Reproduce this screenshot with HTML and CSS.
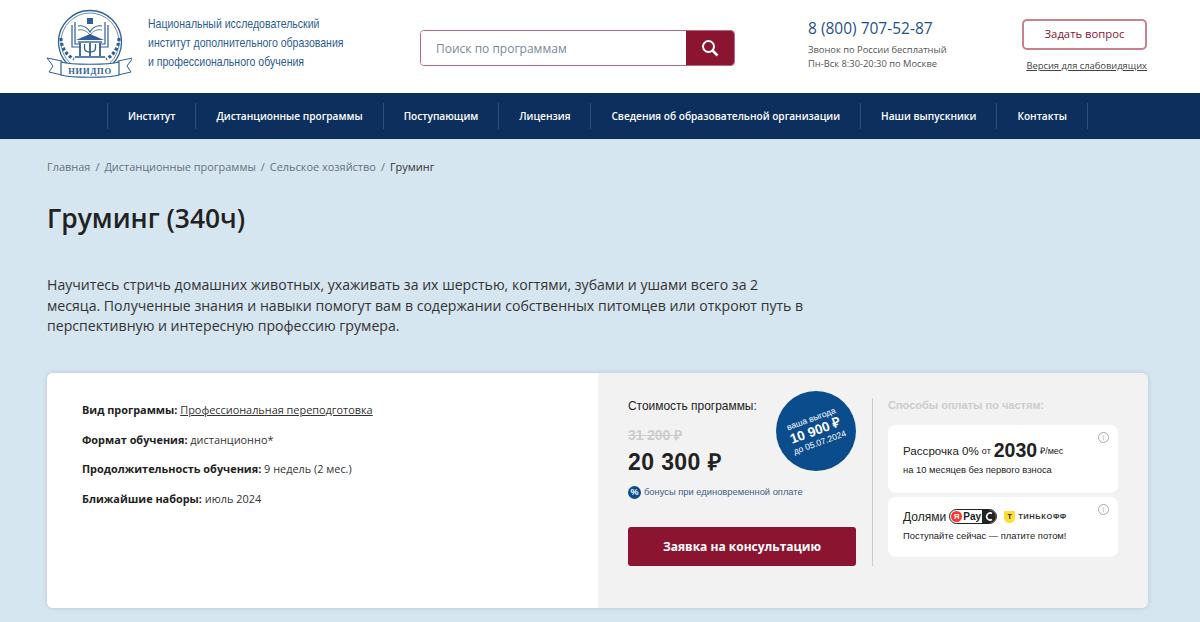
FILE: index.html
```html
<!DOCTYPE html>
<html lang="ru">

<head>
    <meta charset="UTF-8">
    <meta name="viewport" content="width=device-width, initial-scale=1.0">
    <title>Груминг (340ч)</title>
    <link rel="stylesheet" href="styles.css">
</head>

<body>
    <header class="header">
        <a class="logo" href="#">
            <svg class="logo-img" width="86" height="72" viewBox="0 0 86 72" fill="none" stroke="#2f5f96">
                <circle cx="44" cy="34" r="31.500" stroke-width="1.300" />
                <circle cx="44" cy="34" r="29" stroke-width="0.700" />
                <!-- книга и герб -->
                <rect x="41" y="10" width="6" height="6" fill="#2f5f96" stroke="none" />
                <path d="M26 17v22h9M62 17v22h-9M29 14v22h5M59 14v22h-5" stroke-width="1.200" />
                <path d="M32 18c5-1 9 1 12 6 3-5 7-7 12-6" stroke-width="1.200" />
                <path d="M32 22c5-1 9 1 12 5 3-4 7-6 12-5" stroke-width="0.800" />
                <!-- здание -->
                <path d="M30 32l14-6 14 6z" fill="#2f5f96" stroke="none" />
                <path d="M32 34h24" stroke-width="1.400" />
                <path d="M34 35v13M54 35v13M44 35v13" stroke-width="1.800" />
                <path d="M38.500 36v4c0 3 2.500 4 5.500 4s5.500-1 5.500-4v-4" stroke-width="1.300" />
                <path d="M29 49h30" stroke-width="1.600" />
                <!-- ветви -->
                <path d="M15 30c0 9 5 17 13 21M73 30c0 9-5 17-13 21" stroke-width="3.200" stroke-dasharray="3 2" />
                <!-- лента -->
                <path d="M1 50l15 3v14L3 64l4-6zM87 50l-15 3v14l13-3-4-6z" fill="#fff" stroke-width="1" />
                <path d="M15 54c10 3 48 3 58 0v13c-10 3-48 3-58 0z" fill="#fff" stroke-width="1.200" />
                <text class="logo-mark" x="44" y="66" text-anchor="middle">НИИДПО</text>
            </svg>
            <span class="logo-text">Национальный исследовательский<br>институт дополнительного образования<br>и профессионального обучения</span>
        </a>

        <form class="search">
            <input class="search-input" type="text" placeholder="Поиск по программам">
            <button class="search-btn" type="button" aria-label="Поиск">
                <svg width="18" height="18" viewBox="0 0 18 18" fill="none" stroke="#fff" stroke-width="2">
                    <circle cx="7.500" cy="7.500" r="5.500" />
                    <path d="M11.500 11.500l5 5" stroke-width="2.500" />
                </svg>
            </button>
        </form>

        <div class="contacts">
            <a class="phone" href="#">8 (800) 707-52-87</a>
            <p class="contacts-note">Звонок по России бесплатный<br>Пн-Вск 8:30-20:30 по Москве</p>
        </div>

        <div class="actions">
            <a class="ask-btn" href="#">Задать вопрос</a>
            <a class="low-vision" href="#">Версия для слабовидящих</a>
        </div>
    </header>

    <nav class="nav">
        <a href="#">Институт</a>
        <a href="#">Дистанционные программы</a>
        <a href="#">Поступающим</a>
        <a href="#">Лицензия</a>
        <a href="#">Сведения об образовательной организации</a>
        <a href="#">Наши выпускники</a>
        <a href="#">Контакты</a>
    </nav>

    <main class="main">
        <div class="breadcrumbs">
            <a href="#">Главная</a><span>/</span><a href="#">Дистанционные программы</a><span>/</span><a href="#">Сельское хозяйство</a><span>/</span><span class="current">Груминг</span>
        </div>

        <h1 class="title">Груминг (340ч)</h1>

        <p class="lead">Научитесь стричь домашних животных, ухаживать за их шерстью, когтями, зубами и ушами всего за 2 месяца. Полученные знания и навыки помогут вам в содержании собственных питомцев или откроют путь в перспективную и интересную профессию грумера.</p>

        <section class="card">
            <div class="card-info">
                <p><b>Вид программы:</b> <a href="#">Профессиональная переподготовка</a></p>
                <p><b>Формат обучения:</b> дистанционно*</p>
                <p><b>Продолжительность обучения:</b> 9 недель (2 мес.)</p>
                <p><b>Ближайшие наборы:</b> июль 2024</p>
            </div>

            <div class="card-side">
                <div class="price">
                    <div class="price-label">Стоимость программы:</div>
                    <div class="price-old">31 200 ₽</div>
                    <div class="price-new">20 300 ₽</div>
                    <div class="bonus"><span class="bonus-icon">%</span>бонусы при единовременной оплате</div>
                    <a class="order-btn" href="#">Заявка на консультацию</a>
                    <div class="badge">
                        <div class="badge-text">
                            <span>ваша выгода</span>
                            <b>10 900 ₽</b>
                            <span>до 05.07.2024</span>
                        </div>
                    </div>
                </div>

                <div class="parts">
                    <div class="parts-title">Способы оплаты по частям:</div>
                    <div class="part part-first">
                        <span class="info">i</span>
                        <div class="part-head">Рассрочка 0% <small>от</small> <strong>2030</strong> <small>₽/мес</small></div>
                        <div class="part-note">на 10 месяцев без первого взноса</div>
                    </div>
                    <div class="part part-second">
                        <span class="info">i</span>
                        <div class="part-head">Долями
                            <span class="ypay"><i>Я</i>Pay<em>
                                <svg width="9" height="9" viewBox="0 0 9 9" fill="none" stroke="#fff" stroke-width="1.600"><path d="M7 1.500A3.500 3.500 0 1 0 7 7.500" /></svg>
                            </em></span>
                            <span class="tinkoff"><i>Т</i>ТИНЬКОФФ</span>
                        </div>
                        <div class="part-note">Поступайте сейчас — платите потом!</div>
                    </div>
                </div>
            </div>
        </section>
    </main>
</body>

</html>
```
FILE: styles.css
```css
* {
    box-sizing: border-box;
}

html,
body {
    height: 100%;
}

body {
    margin: 0;
    overflow: hidden;
    font-family: "Open Sans", Arial, sans-serif;
    color: #222;
    background-color: #d6e6f1;
}

a {
    color: inherit;
    text-decoration: none;
}

p {
    margin: 0;
}

/* шапка */
.header {
    display: flex;
    align-items: flex-start;
    height: 93px;
    padding-left: 46px;
    background: #fff;
}

.logo {
    display: flex;
    width: 374px;
    padding-top: 8px;
}

.logo-img {
    flex: none;
}

.logo-mark {
    font-family: "Liberation Serif", serif;
    font-size: 8.500px;
    font-weight: bold;
    letter-spacing: 0.800px;
    fill: #2f5f96;
    stroke: none;
}

.logo-text {
    margin: 6px 0 0 16px;
    font-family: "Liberation Sans", sans-serif;
    font-size: 13px;
    line-height: 19px;
    color: #2c5c92;
    white-space: nowrap;
    transform: scaleX(0.81);
    transform-origin: left top;
}

.search {
    display: flex;
    width: 315px;
    height: 36px;
    margin-top: 30px;
    border: 1px solid #b8687c;
    border-radius: 4px;
    overflow: hidden;
}

.search-input {
    flex: 1;
    min-width: 0;
    padding: 0 15px;
    border: none;
    outline: none;
    font-family: inherit;
    font-size: 12px;
}

.search-input::placeholder {
    color: #7c8a99;
}

.search-btn {
    display: flex;
    align-items: center;
    justify-content: center;
    width: 48px;
    padding: 0;
    border: none;
    background-color: #8b1430;
}

.contacts {
    width: 214px;
    margin: 18px 0 0 73px;
}

.phone {
    display: block;
    font-size: 15.500px;
    font-weight: 500;
    line-height: 20px;
    color: #1f5288;
}

.contacts-note {
    margin-top: 5px;
    font-size: 9.350px;
    line-height: 14px;
    color: #555;
}

.actions {
    width: 125px;
    margin-top: 19px;
    text-align: center;
}

.ask-btn {
    display: block;
    height: 31px;
    border: 2px solid #c4838f;
    border-radius: 5px;
    font-size: 11.300px;
    line-height: 25px;
    color: #8b1430;
}

.low-vision {
    display: block;
    margin-top: 9px;
    font-size: 9.350px;
    text-align: right;
    color: #444;
    text-decoration: underline;
    white-space: nowrap;
}

/* меню */
.nav {
    display: flex;
    align-items: center;
    height: 46px;
    padding-left: 107px;
    background-color: #0d2f5e;
}

.nav a {
    padding: 0 20px;
    border-left: 1px solid #2d4d7a;
    font-size: 10.150px;
    font-weight: 600;
    line-height: 26px;
    color: #fff;
    white-space: nowrap;
}

.nav a:last-child {
    border-right: 1px solid #2d4d7a;
}

/* контент */
.main {
    padding: 0 52px 0 47px;
}

.breadcrumbs {
    display: flex;
    gap: 5px;
    padding-top: 20px;
    font-size: 10.950px;
    line-height: 16px;
    color: #66717c;
}

.breadcrumbs .current {
    color: #333;
}

.title {
    margin: 26px 0 0;
    font-size: 26.400px;
    font-weight: 600;
    line-height: 34px;
    color: #222;
}

.lead {
    width: 765px;
    margin-top: 40px;
    font-size: 14.100px;
    line-height: 20.500px;
    color: #333;
}

.card {
    display: flex;
    height: 235px;
    margin-top: 36px;
    border-radius: 6px;
    overflow: hidden;
    box-shadow: 0 0 5px rgba(0, 0, 0, 0.15);
}

.card-info {
    width: 551px;
    padding: 29.500px 35px;
    background: #fff;
    font-size: 10.900px;
    color: #333;
}

.card-info p {
    line-height: 16px;
    margin-bottom: 13.500px;
}

.card-info b {
    font-weight: 700;
    color: #222;
}

.card-info a {
    text-decoration: underline;
}

.card-side {
    display: flex;
    flex: 1;
    padding-top: 25px;
    background-color: #f2f2f2;
    font-family: "Liberation Sans", Arial, sans-serif;
}

.price {
    position: relative;
    width: 274px;
    padding-left: 30px;
}

.price-label {
    font-size: 11.950px;
    line-height: 16px;
    color: #222;
}

.price-old {
    margin-top: 13px;
    font-size: 13.800px;
    font-weight: bold;
    line-height: 18px;
    color: #ccc;
    text-decoration: line-through;
}

.price-new {
    margin-top: 3px;
    font-size: 23px;
    font-weight: bold;
    line-height: 28px;
    letter-spacing: 0.400px;
    color: #222;
}

.bonus {
    display: flex;
    align-items: center;
    margin-top: 10px;
    font-size: 9.350px;
    line-height: 13px;
    color: #3d6285;
}

.bonus-icon {
    width: 13px;
    height: 13px;
    margin-right: 3px;
    border-radius: 50%;
    background-color: #0b4d8c;
    font-size: 9px;
    font-weight: bold;
    line-height: 13px;
    text-align: center;
    color: #fff;
}

.order-btn {
    display: block;
    width: 228px;
    height: 39px;
    margin-top: 28px;
    border-radius: 3px;
    background-color: #8b1430;
    font-family: "Open Sans", Arial, sans-serif;
    font-size: 12px;
    font-weight: 700;
    line-height: 39px;
    text-align: center;
    color: #fff;
}

.badge {
    position: absolute;
    top: -7px;
    left: 178px;
    display: flex;
    align-items: center;
    justify-content: center;
    width: 80px;
    height: 80px;
    border-radius: 50%;
    background-color: #0b4d8c;
    color: #fff;
}

.badge-text {
    display: flex;
    flex-direction: column;
    align-items: center;
    transform: rotate(-20deg);
    font-size: 8.600px;
    line-height: 11px;
    white-space: nowrap;
}

.badge-text b {
    font-size: 13.500px;
    line-height: 14px;
}

.parts {
    width: 275px;
    height: 168px;
    padding-left: 15px;
    border-left: 1px solid #ccc;
}

.parts-title {
    font-size: 11px;
    font-weight: bold;
    line-height: 14px;
    color: #ccc;
}

.part {
    position: relative;
    width: 230px;
    margin-top: 4px;
    padding-left: 15px;
    border-radius: 8px;
    background: #fff;
    color: #222;
}

.part-first {
    height: 68px;
    margin-top: 13px;
    padding-top: 15px;
}

.part-second {
    height: 60px;
    padding-top: 9px;
}

.part-head {
    display: flex;
    align-items: center;
    gap: 3px;
    height: 22px;
    font-size: 12px;
    white-space: nowrap;
}

.part-first .part-head {
    font-size: 11.600px;
}

.part-head small {
    font-size: 9px;
}

.part-head strong {
    font-size: 19.500px;
}

.part-note {
    margin-top: 1px;
    font-size: 9.400px;
    line-height: 13px;
}

.info {
    position: absolute;
    top: 7px;
    right: 9px;
    width: 11px;
    height: 11px;
    border: 1px solid #aaa;
    border-radius: 50%;
    font-size: 7px;
    line-height: 9px;
    text-align: center;
    color: #aaa;
}

.ypay {
    display: inline-flex;
    align-items: center;
    justify-content: space-between;
    width: 48px;
    height: 15px;
    margin-left: 0;
    padding-left: 1px;
    border: 1px solid #222;
    border-radius: 8px;
    overflow: hidden;
    font-size: 10px;
    font-weight: bold;
}

.ypay i {
    width: 11px;
    height: 11px;
    border-radius: 50%;
    background-color: #f33;
    font-size: 8px;
    font-style: normal;
    line-height: 11px;
    text-align: center;
    color: #fff;
}

.ypay em {
    display: flex;
    align-items: center;
    justify-content: center;
    width: 14px;
    height: 15px;
    background-color: #222;
}

.tinkoff {
    display: inline-flex;
    align-items: center;
    margin-left: 4px;
    font-size: 7.500px;
    font-weight: bold;
    letter-spacing: 0.600px;
    color: #333;
}

.tinkoff i {
    width: 11px;
    height: 12px;
    margin-right: 3px;
    border-radius: 1px 1px 6px 6px;
    background-color: #fd3;
    font-size: 7px;
    font-style: normal;
    line-height: 11px;
    letter-spacing: 0;
    text-align: center;
    color: #222;
}
```
